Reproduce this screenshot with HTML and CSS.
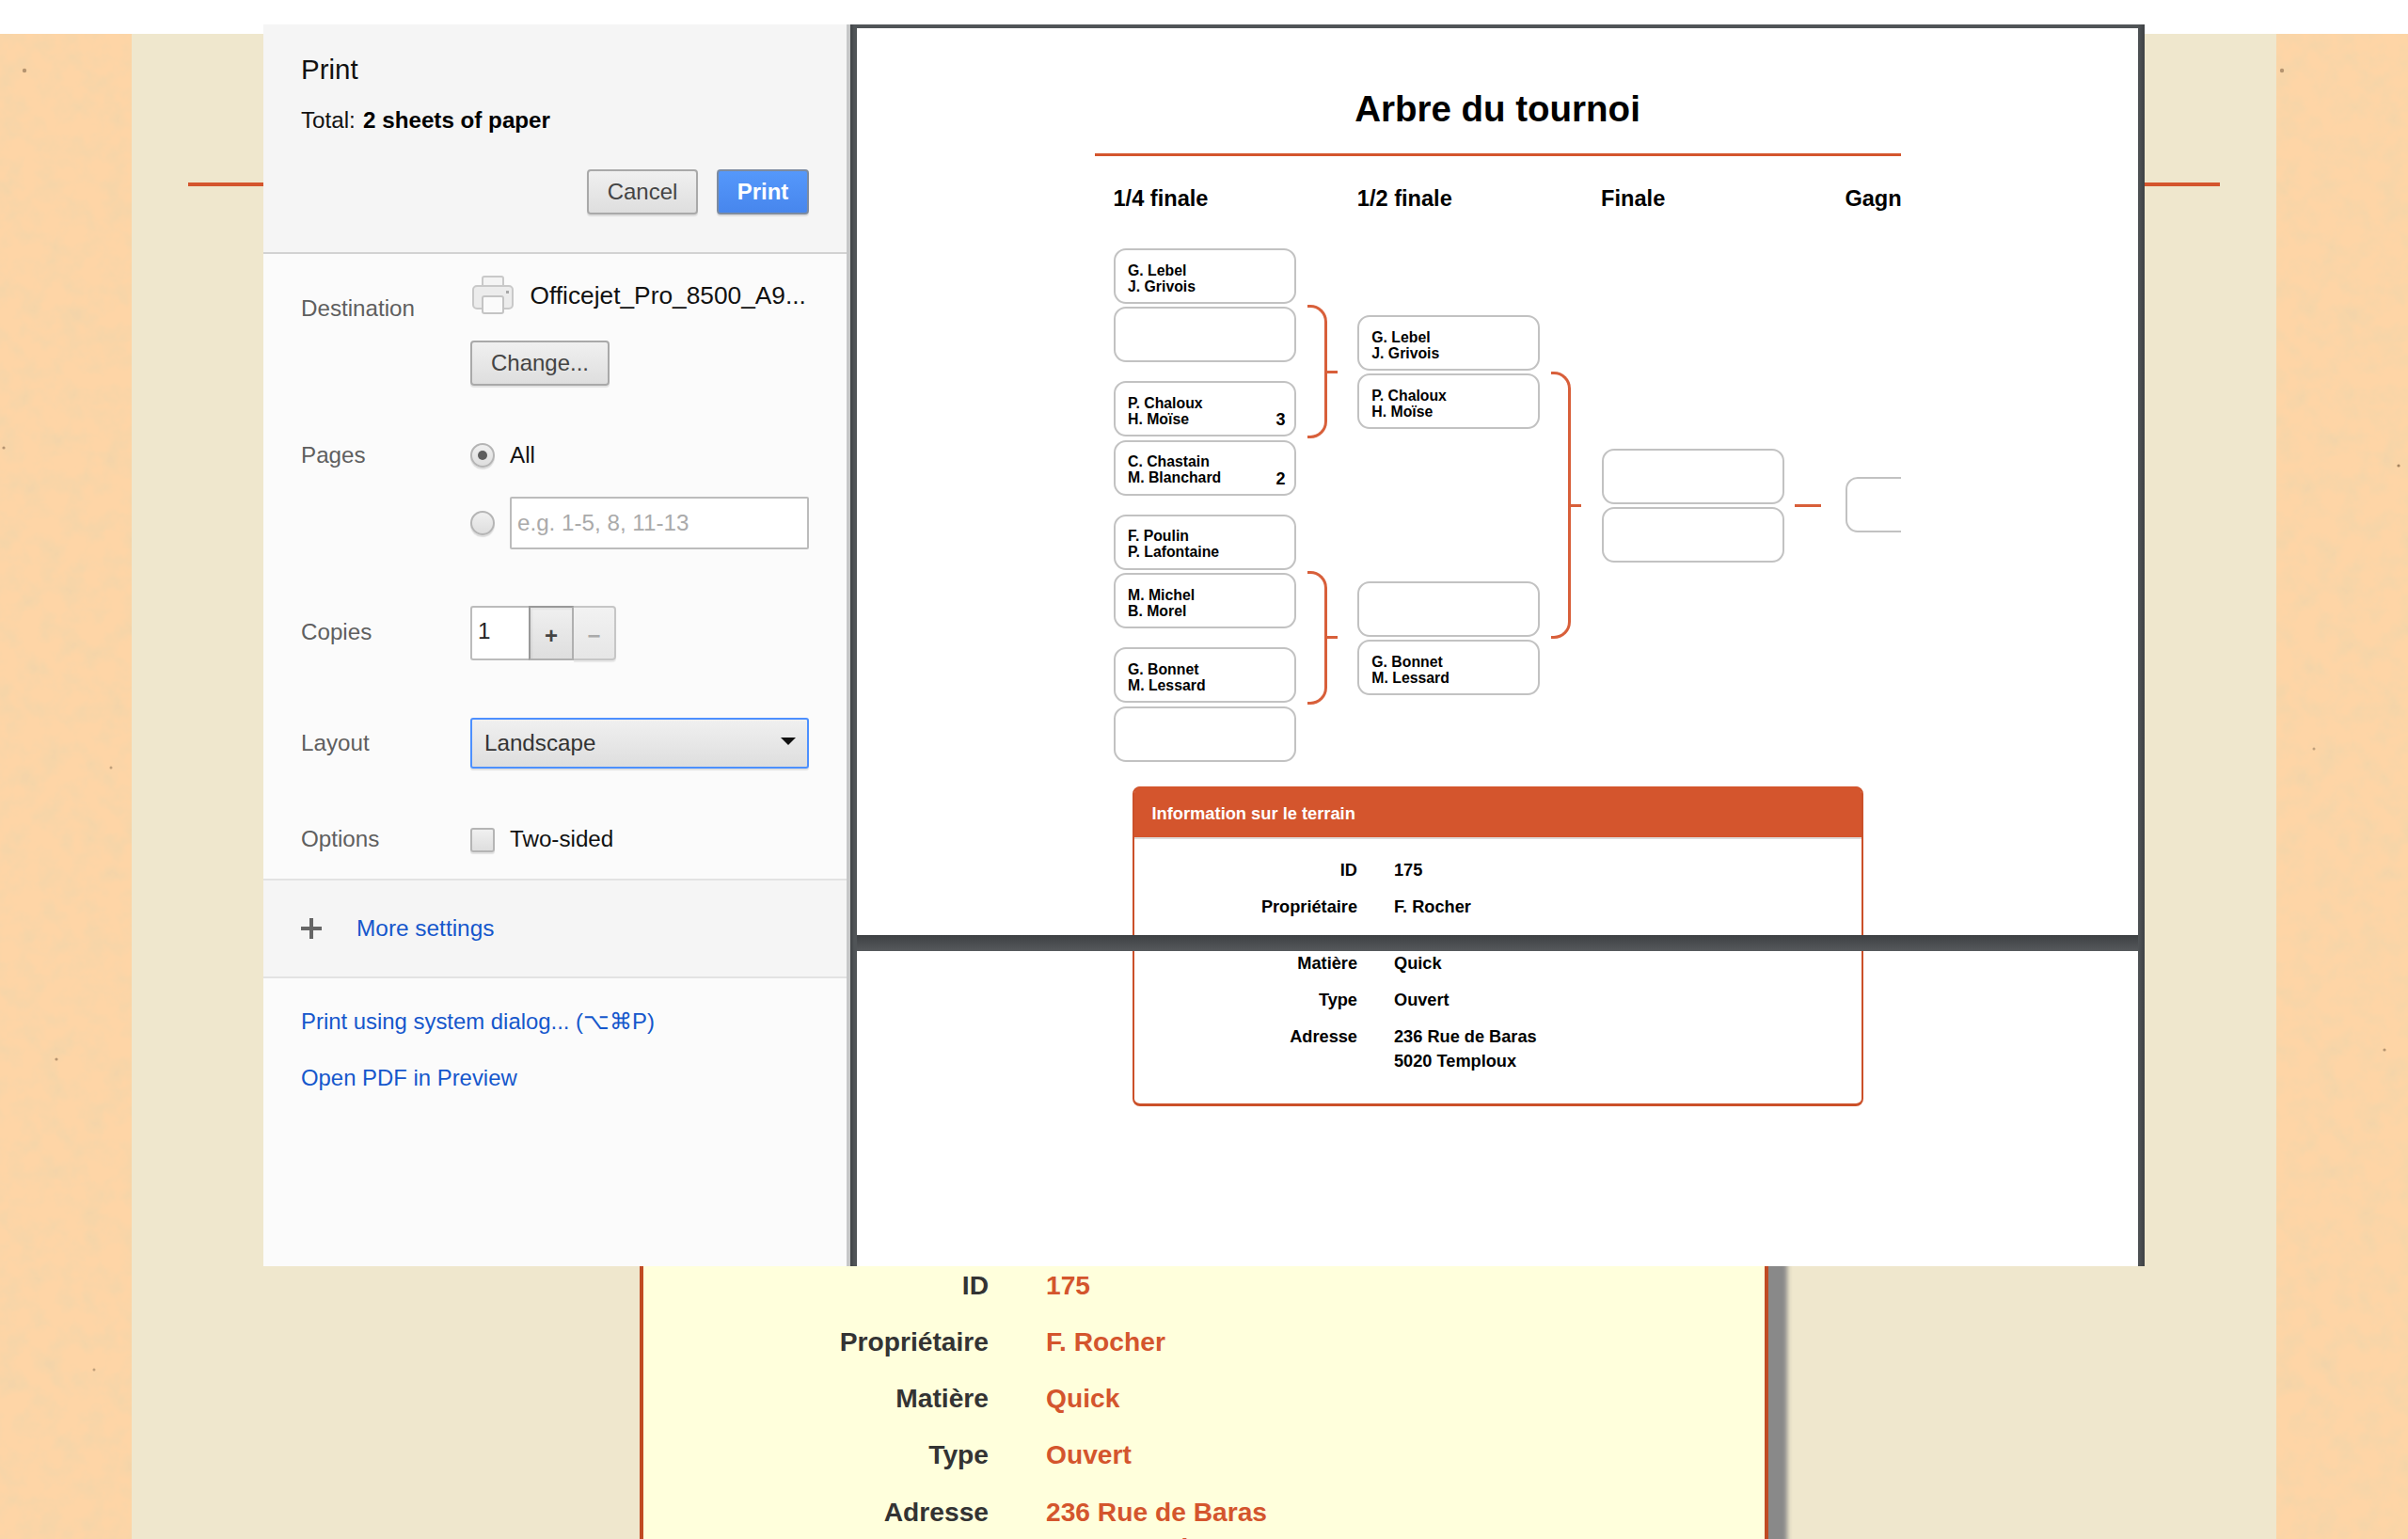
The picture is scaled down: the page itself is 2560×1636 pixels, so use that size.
FILE: index.html
```html
<!DOCTYPE html>
<html lang="en">
<head>
<meta charset="utf-8">
<title>Arbre du tournoi</title>
<link rel="stylesheet" href="styles.css">
</head>
<body>
<svg class="defs" width="0" height="0" aria-hidden="true">
  <filter id="grain" x="0" y="0" width="100%" height="100%">
    <feTurbulence type="fractalNoise" baseFrequency="0.045" numOctaves="4" seed="7"/>
    <feColorMatrix type="matrix" values="0 0 0 0 0.88  0 0 0 0 0.66  0 0 0 0 0.40  1.6 0 0 0 -0.62"/>
  </filter>
</svg>
<div class="site">
  <svg class="paper" width="140" height="1600" aria-hidden="true">
    <rect width="140" height="1600" fill="#fed5a6"/>
    <rect width="140" height="1600" filter="url(#grain)"/>
    <circle cx="26" cy="39" r="2.2" fill="#b59470"/>
    <circle cx="4" cy="440" r="1.6" fill="#b59470"/>
    <circle cx="118" cy="780" r="1.5" fill="#c0a07a"/>
    <circle cx="60" cy="1090" r="1.6" fill="#b59470"/>
    <circle cx="100" cy="1420" r="1.5" fill="#c0a07a"/>
  </svg>
  <main class="center">
    <div class="rule"></div>
    <section class="field-card">
      <div class="field-row"><span class="field-label">ID</span><span class="field-value">175</span></div>
      <div class="field-row"><span class="field-label">Propriétaire</span><span class="field-value">F. Rocher</span></div>
      <div class="field-row"><span class="field-label">Matière</span><span class="field-value">Quick</span></div>
      <div class="field-row"><span class="field-label">Type</span><span class="field-value">Ouvert</span></div>
      <div class="field-row"><span class="field-label">Adresse</span><span class="field-value">236 Rue de Baras<br>5020 Temploux</span></div>
    </section>
  </main>
  <svg class="paper" width="140" height="1600" aria-hidden="true">
    <rect width="140" height="1600" fill="#fed5a6"/>
    <rect width="140" height="1600" filter="url(#grain)"/>
    <circle cx="6" cy="39" r="2.2" fill="#b59470"/>
    <circle cx="130" cy="459" r="1.6" fill="#a5845f"/>
    <circle cx="115" cy="1080" r="1.6" fill="#b59470"/>
    <circle cx="40" cy="760" r="1.5" fill="#c0a07a"/>
  </svg>
</div>

<div class="dialog">
  <aside class="sidebar">
    <header class="side-head">
      <h1 class="side-title">Print</h1>
      <p class="side-total">Total: <b>2 sheets of paper</b></p>
      <div class="side-actions">
        <button class="btn btn-cancel">Cancel</button>
        <button class="btn btn-print">Print</button>
      </div>
    </header>

    <div class="settings">
      <div class="row row-dest">
        <span class="label label-dest">Destination</span>
        <div>
          <div class="dest-line">
            <svg class="printer" width="44" height="42" viewBox="0 0 44 42" aria-hidden="true">
              <rect x="11" y="1" width="22" height="12" rx="2" fill="#f4f4f4" stroke="#c9c9c9" stroke-width="2"/>
              <rect x="1" y="11" width="42" height="24" rx="4" fill="#ececec" stroke="#c9c9c9" stroke-width="2"/>
              <rect x="36" y="16" width="3" height="3" fill="#a8a8a8"/>
              <rect x="11" y="22" width="22" height="18" rx="2" fill="#fafafa" stroke="#c4c4c4" stroke-width="2"/>
            </svg>
            <span class="dest-name">Officejet_Pro_8500_A9...</span>
          </div>
          <button class="btn btn-change">Change...</button>
        </div>
      </div>

      <div class="row row-pages">
        <span class="label">Pages</span>
        <div>
          <div class="opt-line">
            <span class="radio radio-on"></span>
            <span class="opt-text">All</span>
          </div>
          <div class="opt-line opt-range">
            <span class="radio"></span>
            <span class="range-input">e.g. 1-5, 8, 11-13</span>
          </div>
        </div>
      </div>

      <div class="row row-copies">
        <span class="label">Copies</span>
        <div class="stepper">
          <span class="stepper-value">1</span>
          <span class="stepper-btn stepper-plus">+</span>
          <span class="stepper-btn stepper-minus">−</span>
        </div>
      </div>

      <div class="row row-layout">
        <span class="label">Layout</span>
        <div class="select">
          <span>Landscape</span>
          <span class="select-arrow"></span>
        </div>
      </div>

      <div class="row row-options">
        <span class="label">Options</span>
        <div class="opt-line">
          <span class="check"></span>
          <span class="opt-text">Two-sided</span>
        </div>
      </div>
    </div>

    <div class="more">
      <svg class="plus" width="22" height="22" viewBox="0 0 22 22" aria-hidden="true">
        <path d="M11 0V22M0 11H22" stroke="#666" stroke-width="4"/>
      </svg>
      <a class="link link-more">More settings</a>
    </div>

    <nav class="side-links">
      <a class="link">Print using system dialog... (⌥⌘P)</a>
      <a class="link">Open PDF in Preview</a>
    </nav>
  </aside>

  <div class="preview">
    <div class="page page-one">
      <div class="sheet">
        <h2 class="sheet-title">Arbre du tournoi</h2>
        <div class="round-heads">
          <span>1/4 finale</span><span>1/2 finale</span><span>Finale</span><span>Gagnant</span>
        </div>
        <div class="tree">
          <div class="round">
            <div class="group">
              <span class="connector"></span>
              <div class="pair">
                <div class="slot">G. Lebel<br>J. Grivois</div>
                <div class="slot"></div>
              </div>
              <div class="pair">
                <div class="slot">P. Chaloux<br>H. Moïse<span class="score">3</span></div>
                <div class="slot">C. Chastain<br>M. Blanchard<span class="score">2</span></div>
              </div>
            </div>
            <div class="group">
              <span class="connector"></span>
              <div class="pair">
                <div class="slot">F. Poulin<br>P. Lafontaine</div>
                <div class="slot">M. Michel<br>B. Morel</div>
              </div>
              <div class="pair">
                <div class="slot">G. Bonnet<br>M. Lessard</div>
                <div class="slot"></div>
              </div>
            </div>
          </div>
          <div class="round round-semi">
            <div class="group group-semi">
              <span class="connector connector-tall"></span>
              <div class="pair">
                <div class="slot">G. Lebel<br>J. Grivois</div>
                <div class="slot">P. Chaloux<br>H. Moïse</div>
              </div>
              <div class="pair">
                <div class="slot"></div>
                <div class="slot">G. Bonnet<br>M. Lessard</div>
              </div>
            </div>
          </div>
          <div class="round round-final">
            <div class="group">
              <span class="connector-line"></span>
              <div class="pair">
                <div class="slot"></div>
                <div class="slot"></div>
              </div>
            </div>
          </div>
          <div class="round round-winner">
            <div class="slot"></div>
          </div>
        </div>
        <section class="info info-top">
          <h3 class="info-head">Information sur le terrain</h3>
          <div class="info-body">
            <div class="info-row"><span>ID</span><span>175</span></div>
            <div class="info-row"><span>Propriétaire</span><span>F. Rocher</span></div>
          </div>
        </section>
      </div>
    </div>
    <div class="page-gap"></div>
    <div class="page page-two">
      <div class="sheet">
        <section class="info info-bottom">
          <div class="info-row"><span>Matière</span><span>Quick</span></div>
          <div class="info-row"><span>Type</span><span>Ouvert</span></div>
          <div class="info-row"><span>Adresse</span><span>236 Rue de Baras<br>5020 Temploux</span></div>
        </section>
      </div>
    </div>
  </div>
</div>
</body>
</html>
```

FILE: styles.css
```css
* { box-sizing: border-box; }
html, body { margin: 0; padding: 0; }
body {
  width: 2560px;
  height: 1636px;
  overflow: hidden;
  position: relative;
  background: #fff;
  font-family: "Liberation Sans", Arial, sans-serif;
}
.defs { display: block; height: 0; }

/* underlying page */
.site {
  margin-top: 36px;
  height: 1600px;
  display: grid;
  grid-template-columns: 140px 1fr 140px;
  overflow: hidden;
}
.paper { display: block; }
.center {
  background: #efe7cd;
  padding-top: 158px;
}
.rule {
  height: 4px;
  margin: 0 60px;
  background: #d4552d;
}
.field-card {
  width: 1200px;
  margin: 1128.5px auto 0;
  padding-top: 20px;
  background: #ffffdc;
  border-left: 4px solid #c04a23;
  border-right: 4px solid #c04a23;
  box-shadow: 20px 0 5px #898989;
  display: flex;
  flex-direction: column;
  gap: 22.25px;
  font-size: 28.2px;
  line-height: 38px;
  font-weight: 700;
}
.field-row {
  display: grid;
  grid-template-columns: 367px 1fr;
  column-gap: 61px;
}
.field-label { text-align: right; color: #333; }
.field-value { color: #d4552d; }

/* print dialog */
.dialog {
  position: absolute;
  top: 26px;
  left: 280px;
  width: 2000px;
  height: 1320px;
  display: flex;
}
.sidebar {
  width: 624px;
  flex: none;
  background: #fbfbfb;
  border-right: 4px solid #c6c7c8;
  display: flex;
  flex-direction: column;
  font-size: 24.2px;
  line-height: 28px;
}
.side-head {
  height: 244px;
  padding: 30px 40px 0;
  background: #f5f5f5;
  border-bottom: 2px solid #d2d2d2;
}
.side-title {
  margin: 0;
  font-size: 29.5px;
  line-height: 36px;
  font-weight: 400;
  color: #111;
}
.side-total {
  margin: 22px 0 38px;
  color: #111;
}
.side-total b { color: #000; margin-left: 1.5px; }
.side-actions {
  display: flex;
  justify-content: flex-end;
  gap: 20px;
}
.btn {
  height: 48px;
  padding: 0;
  font: 400 24px/1 "Liberation Sans", Arial, sans-serif;
  color: #444;
  background: linear-gradient(#f0f0f0, #dedede);
  border: 2px solid #a9a9a9;
  border-radius: 4px;
  box-shadow: 0 2px 1px rgba(0, 0, 0, .1);
}
.btn-cancel { width: 118px; }
.btn-print {
  width: 98px;
  color: #fff;
  font-weight: 700;
  background: linear-gradient(#5598fb, #4786ed);
  border-color: #7d8ba0;
}
.btn-change {
  width: 148px;
  margin-top: 27px;
  display: block;
}

.settings {
  height: 664px;
  padding: 23px 40px 0;
}
.row {
  display: grid;
  grid-template-columns: 180px 1fr;
  align-items: center;
  color: #111;
}
.label { color: #5f5f5f; }
.row-dest { align-items: start; }
.label-dest { margin-top: 21px; }
.dest-line {
  display: flex;
  align-items: center;
  gap: 18px;
  height: 42px;
}
.printer { flex: none; margin-left: 1.5px; }
.dest-name { color: #111; white-space: nowrap; font-size: 26.3px; }
.row-pages { margin-top: 60px; align-items: start; }
.opt-line {
  display: flex;
  align-items: center;
  gap: 16px;
  min-height: 28px;
}
.opt-range { margin-top: 30px; }
.radio {
  width: 26px;
  height: 26px;
  flex: none;
  border-radius: 50%;
  border: 2px solid #b5b5b5;
  background: linear-gradient(#f0f0f0, #dedede);
  box-shadow: 0 2px 1px rgba(0, 0, 0, .12);
  display: flex;
  align-items: center;
  justify-content: center;
}
.radio-on::before {
  content: "";
  width: 10px;
  height: 10px;
  border-radius: 50%;
  background: #5e5e5e;
}
.opt-text { color: #111; }
.range-input {
  width: 318px;
  height: 56px;
  padding-left: 6px;
  display: flex;
  align-items: center;
  color: #aaa;
  background: #fff;
  border: 2px solid #bcbcbc;
  border-radius: 2px;
}
.row-copies { margin-top: 60px; }
.row-copies .label { margin-bottom: 2px; }
.stepper {
  display: flex;
  width: 155px;
  height: 58px;
}
.stepper-value {
  width: 62px;
  padding-left: 6px;
  display: flex;
  align-items: center;
  padding-bottom: 4px;
  background: #fff;
  color: #222;
  border: 2px solid #bcbcbc;
  border-right: 0;
  border-radius: 3px 0 0 3px;
}
.stepper-btn {
  display: flex;
  align-items: center;
  justify-content: center;
  padding-top: 6px;
  font-size: 24px;
  font-weight: 700;
  background: linear-gradient(#f0f0f0, #dedede);
  box-shadow: 0 2px 1px rgba(0, 0, 0, .08);
}
.stepper-plus {
  width: 48px;
  color: #444;
  border: 2px solid #b0b0b0;
  border-top-color: #999;
  border-left-color: #999;
  box-shadow: inset 2px 2px 2px rgba(0, 0, 0, .05);
}
.stepper-minus {
  width: 45px;
  color: #aaa;
  background: linear-gradient(#f2f2f2, #e6e6e6);
  border: 2px solid #c6c6c6;
  border-left: 0;
  border-radius: 0 4px 4px 0;
}
.row-layout { margin-top: 61px; }
.select {
  width: 360px;
  height: 54px;
  padding: 0 12px 0 13px;
  display: flex;
  align-items: center;
  justify-content: space-between;
  color: #333;
  background: linear-gradient(#f0f0f0, #dedede);
  border: 2px solid #4d90fe;
  border-radius: 3px;
  box-shadow: 0 2px 1px rgba(0, 0, 0, .1);
}
.select-arrow {
  width: 0;
  height: 0;
  border-left: 8px solid transparent;
  border-right: 8px solid transparent;
  border-top: 8px solid #111;
  margin-top: -4px;
}
.row-options { margin-top: 61px; }
.check {
  width: 26px;
  height: 26px;
  flex: none;
  margin-top: 2px;
  border: 2px solid #b5b5b5;
  border-radius: 3px;
  background: linear-gradient(#f0f0f0, #dedede);
  box-shadow: 0 2px 1px rgba(0, 0, 0, .1);
}
.more {
  height: 106px;
  padding-left: 40px;
  display: flex;
  align-items: center;
  gap: 37px;
  background: #f5f5f5;
  border-top: 2px solid #e3e3e3;
  border-bottom: 2px solid #e3e3e3;
}
.link { color: #1557cc; font-size: 23.9px; }
.link-more { font-size: 24.4px; }
.side-links {
  padding: 32px 40px 0;
  display: flex;
  flex-direction: column;
  gap: 32px;
}

/* print preview */
.preview {
  flex: 1;
  padding: 4px 7px 0;
  display: flex;
  flex-direction: column;
  background: linear-gradient(90deg, #3f4245, #505457 4px, #505457 calc(100% - 7px), #3f4245);
}
.page-gap {
  height: 17px;
  flex: none;
  background: linear-gradient(#3d4043, #56595c);
}
.page {
  background: #fff;
  overflow: hidden;
  color: #000;
  font-weight: 700;
}
.page-one { height: 964px; padding-top: 63px; flex: none; }
.page-two { flex: 1; }
.sheet {
  width: 857px;
  margin: 0 auto;
  overflow: hidden;
}
.sheet-title {
  margin: 0;
  padding-bottom: 24px;
  font-size: 38.5px;
  line-height: 46px;
  text-align: center;
  border-bottom: 3px solid #d4552d;
}
.round-heads {
  margin-top: 31px;
  padding-left: 20px;
  display: grid;
  grid-template-columns: repeat(4, 194px);
  column-gap: 65.3px;
  font-size: 23.6px;
  line-height: 28px;
  white-space: nowrap;
}
.tree {
  margin-top: 39px;
  padding-left: 20.5px;
  display: grid;
  grid-template-columns: repeat(4, 194px);
  column-gap: 65.3px;
  align-items: start;
}
.round {
  display: flex;
  flex-direction: column;
  gap: 20px;
}
.round-semi { padding-top: 71px; }
.round-final { padding-top: 212.7px; }
.round-winner { padding-top: 242.7px; }
.group {
  position: relative;
  display: flex;
  flex-direction: column;
  gap: 20px;
}
.group-semi { gap: 161.6px; }
.pair {
  display: flex;
  flex-direction: column;
  gap: 3.4px;
}
.slot {
  position: relative;
  height: 59px;
  padding: 12.5px 13px 0;
  font-size: 15.8px;
  line-height: 17px;
  border: 2px solid #c2c2c2;
  border-radius: 13px;
  background: #fff;
}
.score {
  position: absolute;
  right: 9.5px;
  bottom: 6px;
  font-size: 18px;
  line-height: 20px;
}
.connector {
  position: absolute;
  left: 205.5px;
  top: 60px;
  width: 21px;
  height: 142px;
  border: 3px solid #d85f3a;
  border-left: 0;
  border-radius: 0 18px 18px 0;
}
.connector::after {
  content: "";
  position: absolute;
  left: 100%;
  top: 50%;
  margin-top: -1.5px;
  width: 14px;
  height: 3px;
  background: #d85f3a;
}
.connector-tall { height: 284px; }
.connector-line {
  position: absolute;
  left: 205px;
  top: 59px;
  width: 28px;
  height: 3px;
  background: #d85f3a;
}
.info {
  width: 777px;
  margin: 0 40px;
  border: 2px solid #cb5029;
}
.info-top {
  margin-top: 26px;
  padding-bottom: 80px;
  border-radius: 8px 8px 0 0;
}
.info-head {
  margin: -2px 0 0;
  height: 54px;
  padding: 5px 0 0 19px;
  display: flex;
  align-items: center;
  color: #fff;
  background: #d4552d;
  border-radius: 7px 7px 0 0;
  font-size: 18.3px;
  font-weight: 700;
  box-shadow: 0 2px 0 #dcdcdc;
}
.info-body {
  padding-top: 22px;
  display: flex;
  flex-direction: column;
  gap: 13px;
}
.info-bottom {
  height: 165px;
  border-top: 0;
  border-bottom-width: 3px;
  border-radius: 0 0 8px 8px;
  display: flex;
  flex-direction: column;
  gap: 13px;
}
.info-row {
  display: grid;
  grid-template-columns: 237.5px 1fr;
  column-gap: 39px;
  font-size: 18.2px;
  line-height: 26px;
}
.info-row > span:first-child { text-align: right; }
```
